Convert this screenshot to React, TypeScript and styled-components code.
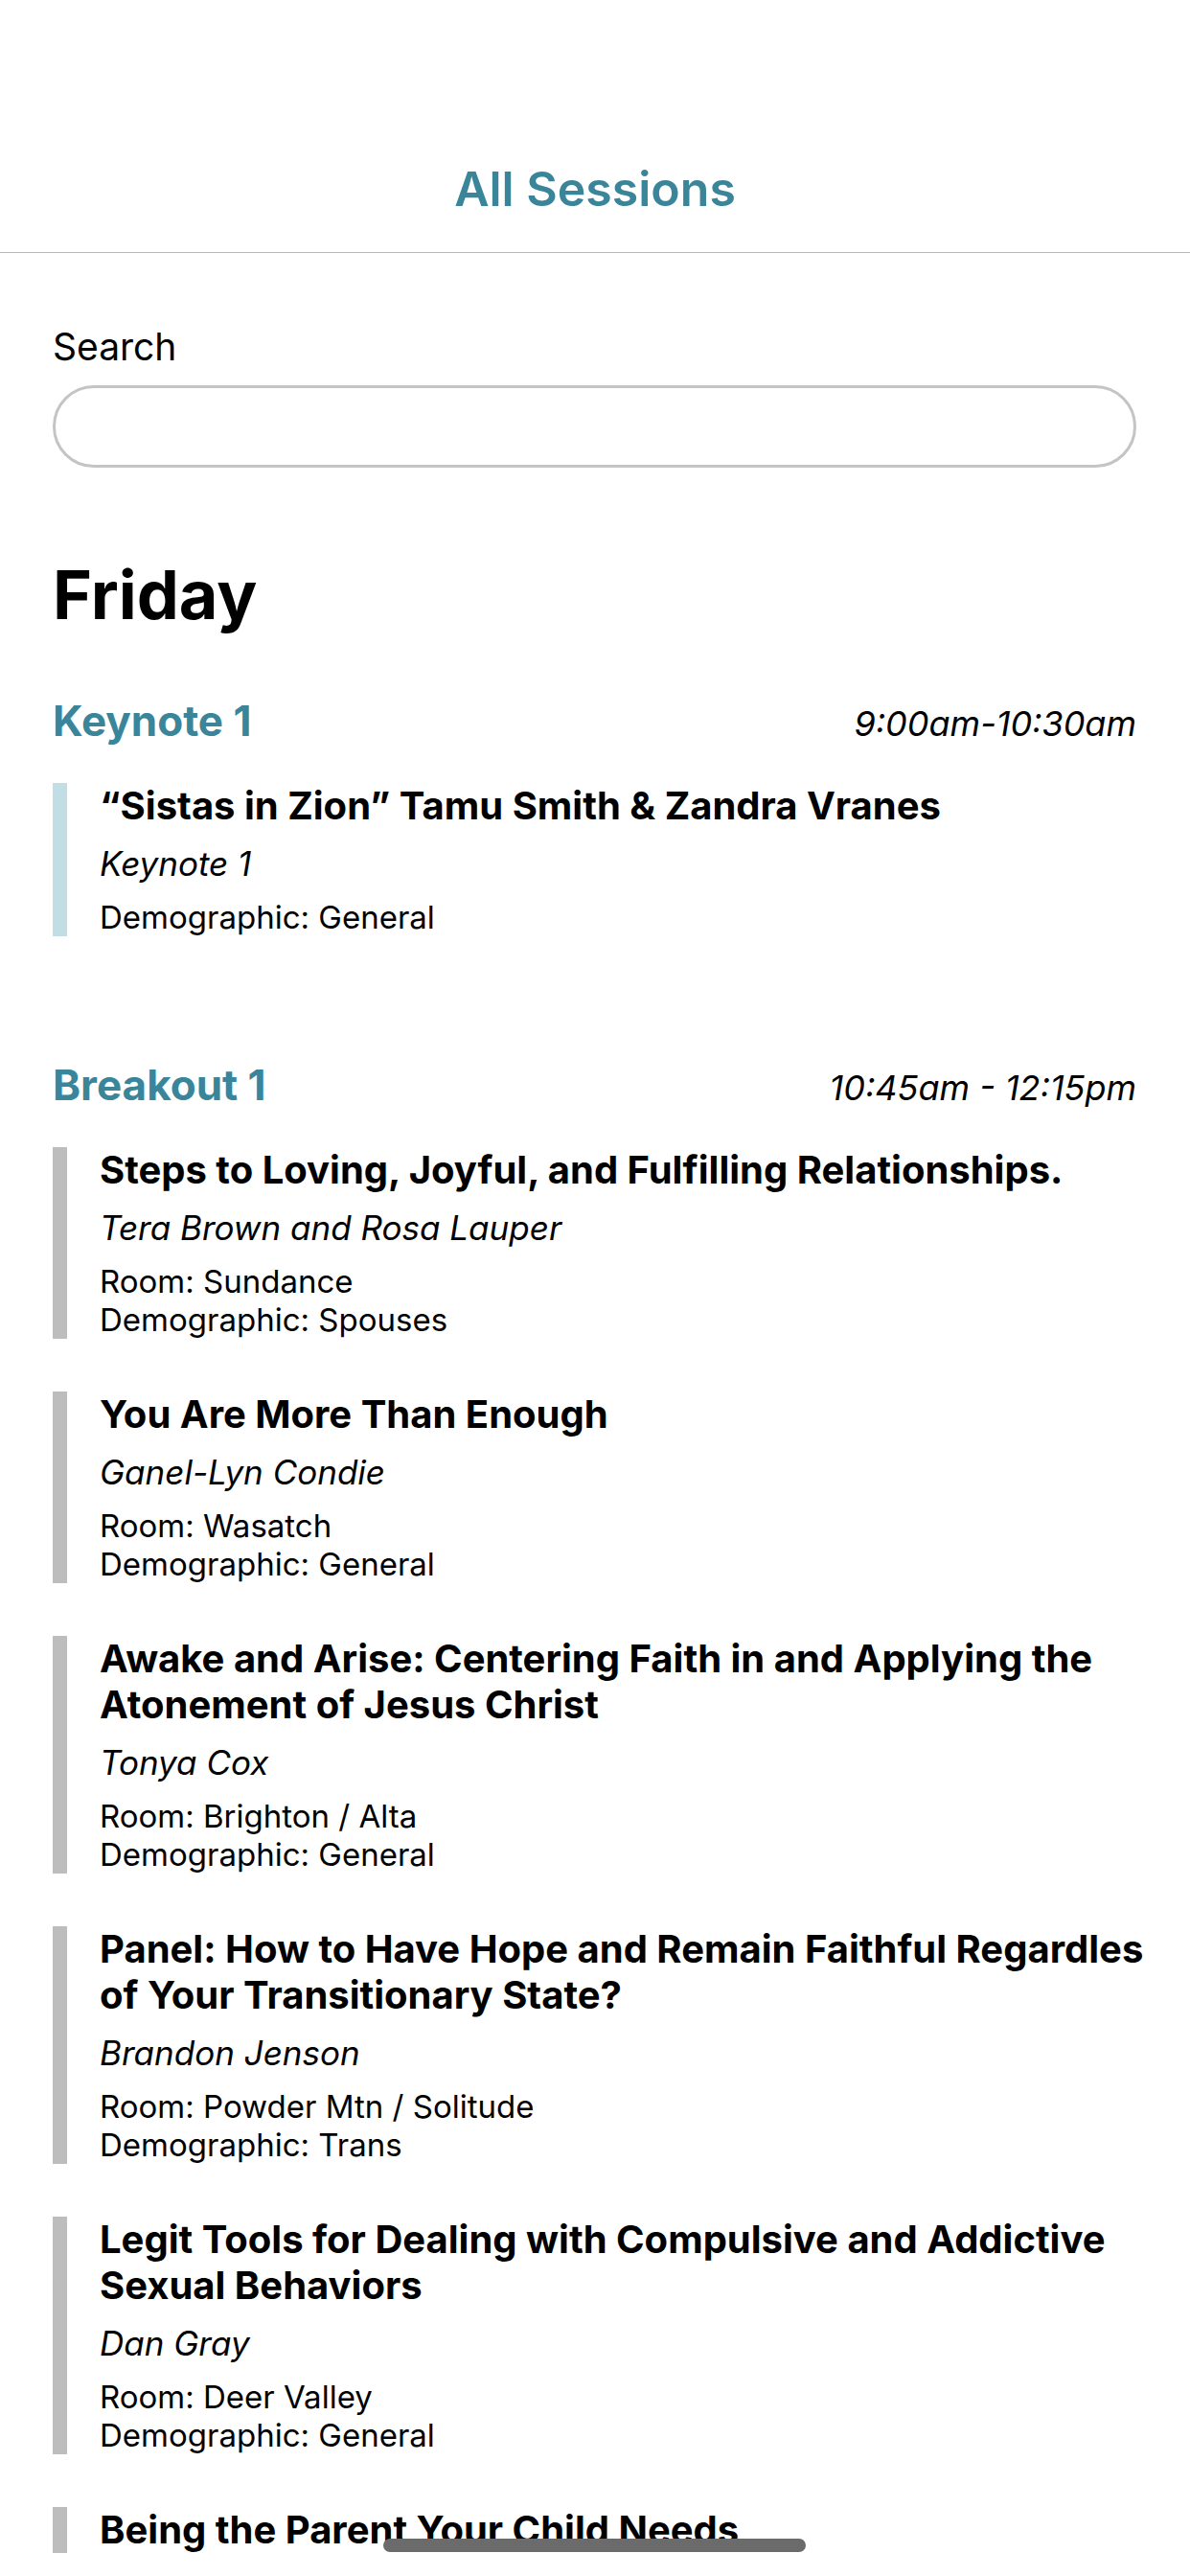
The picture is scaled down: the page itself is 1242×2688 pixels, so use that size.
import React from "react";
import styled, { createGlobalStyle } from "styled-components";

type Session = {
  title: string;
  subtitle?: string;
  room?: string;
  demographic?: string;
};

type Block = {
  name: string;
  time: string;
  tone: "keynote" | "breakout";
  sessions: Session[];
};

const friday: Block[] = [
  {
    name: "Keynote 1",
    time: "9:00am-10:30am",
    tone: "keynote",
    sessions: [
      {
        title: "\u201cSistas in Zion\u201d Tamu Smith & Zandra Vranes",
        subtitle: "Keynote 1",
        demographic: "General",
      },
    ],
  },
  {
    name: "Breakout 1",
    time: "10:45am - 12:15pm",
    tone: "breakout",
    sessions: [
      {
        title: "Steps to Loving, Joyful, and Fulfilling Relationships.",
        subtitle: "Tera Brown and Rosa Lauper",
        room: "Sundance",
        demographic: "Spouses",
      },
      {
        title: "You Are More Than Enough",
        subtitle: "Ganel-Lyn Condie",
        room: "Wasatch",
        demographic: "General",
      },
      {
        title: "Awake and Arise: Centering Faith in and Applying the Atonement of Jesus Christ",
        subtitle: "Tonya Cox",
        room: "Brighton / Alta",
        demographic: "General",
      },
      {
        title: "Panel: How to Have Hope and Remain Faithful Regardles of Your Transitionary State?",
        subtitle: "Brandon Jenson",
        room: "Powder Mtn / Solitude",
        demographic: "Trans",
      },
      {
        title: "Legit Tools for Dealing with Compulsive and Addictive Sexual Behaviors",
        subtitle: "Dan Gray",
        room: "Deer Valley",
        demographic: "General",
      },
      {
        title: "Being the Parent Your Child Needs",
      },
    ],
  },
];

const App: React.FC = () => {
  const [query, setQuery] = React.useState("");

  return (
    <>
      <GlobalStyle />
      <Screen>
        <Header>
          <h1>All Sessions</h1>
        </Header>
        <Content>
          <SearchField>
            <span>Search</span>
            <input value={query} onChange={(event) => setQuery(event.target.value)} />
          </SearchField>

          <DayTitle>Friday</DayTitle>

          {friday.map((block) => (
            <BlockSection key={block.name}>
              <BlockHeader>
                <h2>{block.name}</h2>
                <time>{block.time}</time>
              </BlockHeader>
              <SessionList>
                {block.sessions.map((session) => (
                  <SessionCard key={session.title} $tone={block.tone}>
                    <strong>{session.title}</strong>
                    {session.subtitle && <em>{session.subtitle}</em>}
                    {session.demographic && (
                      <Meta>
                        {session.room && <span>Room: {session.room}</span>}
                        <span>Demographic: {session.demographic}</span>
                      </Meta>
                    )}
                  </SessionCard>
                ))}
              </SessionList>
            </BlockSection>
          ))}
        </Content>
        <HomeIndicator />
      </Screen>
    </>
  );
};

export default App;

const GlobalStyle = createGlobalStyle`
  html, body {
    margin: 0;
    padding: 0;
    background: #ffffff;
  }

  body {
    font-family: Inter, "Noto Sans", "Liberation Sans", sans-serif;
    color: #000000;
  }
`;

const Screen = styled.div`
  position: relative;
  width: 1242px;
  height: 2688px;
  overflow: hidden;
  background: #ffffff;
`;

const Header = styled.header`
  padding: 167px 0 36px;
  border-bottom: 1px solid #b8b8b8;
  text-align: center;

  h1 {
    margin: 0;
    font-size: 50px;
    line-height: 60px;
    font-weight: 600;
    color: #3a8599;
  }
`;

const Content = styled.main`
  padding: 75px 56px 0 55px;
`;

const SearchField = styled.label`
  display: grid;
  gap: 18px;

  span {
    font-size: 39px;
    line-height: 45px;
    font-weight: 400;
  }

  input {
    box-sizing: border-box;
    width: 100%;
    height: 86px;
    border: 3px solid #c4c4c4;
    border-radius: 43px;
    padding: 0 36px;
    font-family: inherit;
    font-size: 36px;
    outline: none;
    background: #ffffff;
  }
`;

const DayTitle = styled.h1`
  margin: 90px 0 63px;
  font-size: 70px;
  line-height: 86px;
  font-weight: 700;
`;

const BlockSection = styled.section`
  & + & {
    margin-top: 130px;
  }
`;

const BlockHeader = styled.div`
  display: flex;
  align-items: baseline;
  justify-content: space-between;
  margin-bottom: 40px;

  h2 {
    margin: 0;
    font-size: 44px;
    line-height: 50px;
    font-weight: 700;
    color: #3a8599;
  }

  time {
    font-size: 36px;
    font-style: italic;
    color: #000000;
  }
`;

const SessionList = styled.div`
  display: grid;
  gap: 55px;
`;

const SessionCard = styled.article<{ $tone: "keynote" | "breakout" }>`
  display: grid;
  gap: 14px;
  margin-right: -14px;
  padding-left: 34px;
  border-left: 15px solid ${({ $tone }) => ($tone === "keynote" ? "#c1dee4" : "#bdbdbd")};

  strong {
    font-size: 40px;
    line-height: 48px;
    font-weight: 700;
  }

  em {
    font-size: 35px;
    line-height: 44px;
    font-style: italic;
  }
`;

const Meta = styled.div`
  display: grid;

  span {
    font-size: 33px;
    line-height: 40px;
  }
`;

const HomeIndicator = styled.div`
  position: absolute;
  left: 400px;
  bottom: 25px;
  width: 441px;
  height: 14px;
  border-radius: 7px;
  background: #6b6b6b;
`;
